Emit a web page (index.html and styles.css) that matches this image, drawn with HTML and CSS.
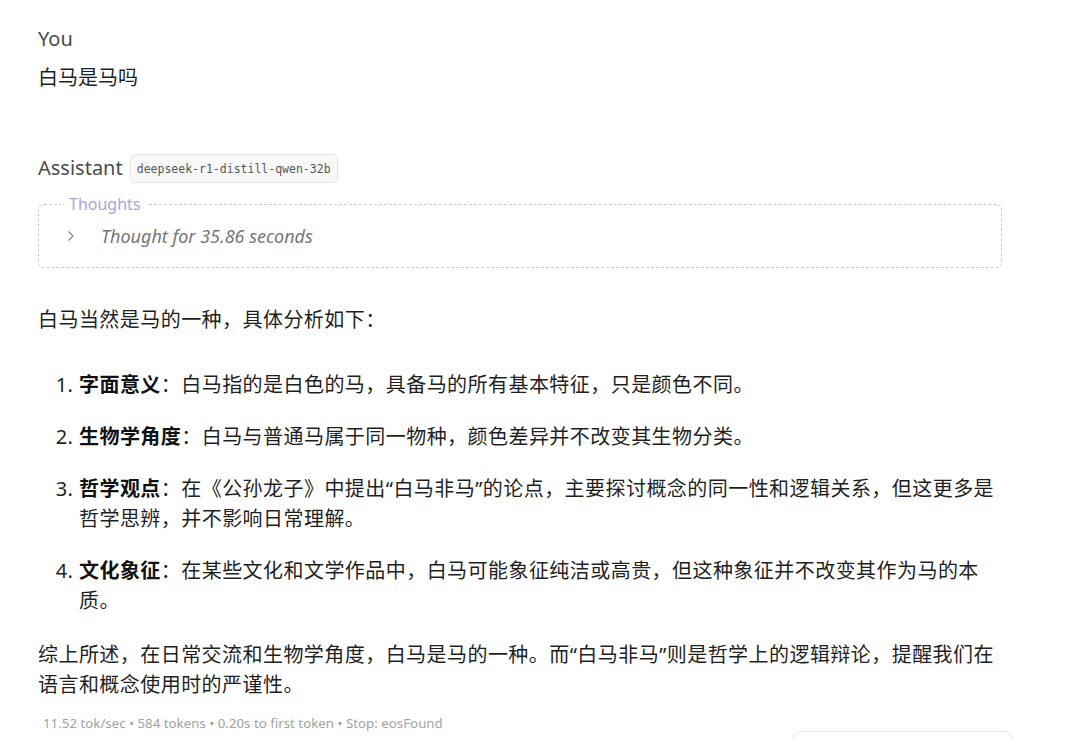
FILE: index.html
```html
<!DOCTYPE html>
<html lang="zh-CN">
<head>
    <meta charset="UTF-8">
    <meta name="viewport" content="width=device-width, initial-scale=1.0">
    <title>Chat</title>
    <link rel="stylesheet" href="styles.css">
</head>
<body>
    <div class="chat">
        <div class="message user">
            <div class="role">You</div>
            <div class="content">白马是马吗</div>
        </div>

        <div class="message assistant">
            <div class="role-row">
                <span class="role">Assistant</span>
                <span class="model">deepseek-r1-distill-qwen-32b</span>
            </div>

            <fieldset class="thoughts">
                <legend>Thoughts</legend>
                <div class="thought-toggle">
                    <svg class="chevron" width="10" height="14" viewBox="0 0 10 14">
                        <path d="M2.5 2.5 L7 7 L2.5 11.5" fill="none" stroke="#8a8a8a" stroke-width="1.3" />
                    </svg>
                    <span class="thought-label">Thought for 35.86 seconds</span>
                </div>
            </fieldset>

            <div class="answer">
                <p>白马当然是马的一种，具体分析如下：</p>
                <ol>
                    <li><strong>字面意义</strong>：白马指的是白色的马，具备马的所有基本特征，只是颜色不同。</li>
                    <li><strong>生物学角度</strong>：白马与普通马属于同一物种，颜色差异并不改变其生物分类。</li>
                    <li><strong>哲学观点</strong>：在《公孙龙子》中提出“白马非马”的论点，主要探讨概念的同一性和逻辑关系，但这更多是哲学思辨，并不影响日常理解。</li>
                    <li><strong>文化象征</strong>：在某些文化和文学作品中，白马可能象征纯洁或高贵，但这种象征并不改变其作为马的本质。</li>
                </ol>
                <p>综上所述，在日常交流和生物学角度，白马是马的一种。而“白马非马”则是哲学上的逻辑辩论，提醒我们在语言和概念使用时的严谨性。</p>
            </div>

            <div class="stats">11.52 tok/sec &bull; 584 tokens &bull; 0.20s to first token &bull; Stop: eosFound</div>
        </div>
    </div>

    <div class="float-box"></div>
</body>
</html>
```

FILE: styles.css
```css
body {
    margin: 0;
    background: #ffffff;
    color: #1f1f1f;
    font-family: "Noto Sans", "Noto Sans CJK SC", sans-serif;
    overflow: hidden;
}

.chat {
    width: 964px;
    padding: 24px 0 0 38px;
}

.message .role {
    font-size: 20px;
    line-height: 30px;
    color: #4b4b4b;
}

.user .content {
    margin-top: 9px;
    font-size: 20px;
    line-height: 30px;
}

.assistant {
    margin-top: 60px;
}

.role-row {
    display: flex;
    align-items: center;
    gap: 7px;
    height: 30px;
}

.model {
    font-family: "DejaVu Sans Mono", "Liberation Mono", monospace;
    font-size: 11.5px;
    color: #555;
    background: #f8f8f8;
    border: 1px solid #e6e6e6;
    border-radius: 5px;
    padding: 0 6px;
    height: 29px;
    line-height: 29px;
    box-sizing: border-box;
}

.thoughts {
    margin: 11px 0 0;
    padding: 8px 22px 17px;
    border: 1px dashed #c9c7dd;
    border-radius: 6px;
    min-width: 0;
}

.thoughts legend {
    padding: 0 8px;
    font-size: 16px;
    line-height: 20px;
    color: #a9a4da;
}

.thought-toggle {
    display: flex;
    align-items: center;
    height: 28px;
    padding-left: 5px;
}

.chevron {
    margin-right: 25px;
}

.thought-label {
    font-size: 18px;
    font-style: italic;
    color: #767676;
}

.answer {
    margin-top: 37px;
    font-size: 20px;
    line-height: 30px;
    letter-spacing: 0.45px;
}

.answer p {
    margin: 0;
}

.answer ol {
    margin: 35px 0 24px;
    padding-left: 41px;
}

.answer li + li {
    margin-top: 22px;
}

.answer strong {
    font-weight: 700;
    color: #111;
}

.stats {
    margin-top: 13px;
    padding-left: 5px;
    font-size: 13.3px;
    line-height: 20px;
    color: #a2a2a2;
}

.float-box {
    position: fixed;
    left: 793px;
    top: 731px;
    width: 218px;
    height: 60px;
    border: 1px solid #e8e8e8;
    border-radius: 8px;
    background: #fff;
}
```
